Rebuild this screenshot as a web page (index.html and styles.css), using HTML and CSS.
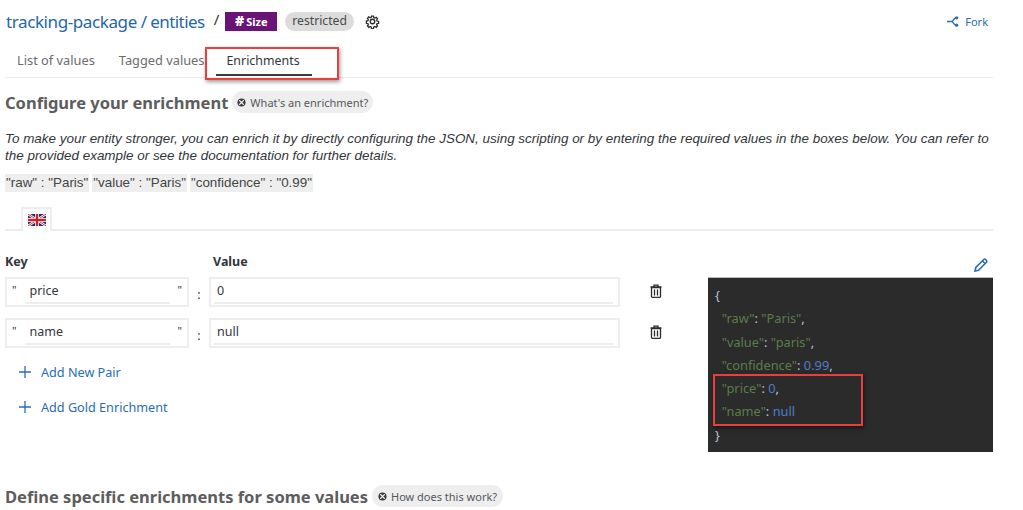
FILE: index.html
```html
<!DOCTYPE html>
<html lang="en">
<head>
<meta charset="utf-8">
<title>Enrichments</title>
<link rel="stylesheet" href="styles.css">
</head>
<body>
<div class="page">
  <header class="top">
    <div class="crumbs">
      <a class="crumb">tracking-package</a><span class="crumb-sep">/</span><a class="crumb">entities</a><span class="crumb-slash">/</span>
      <span class="tag"><b class="hash">#</b>Size</span>
      <span class="pill">restricted</span>
      <svg class="gear" viewBox="0 0 16 16" width="15" height="15"><path d="M6.800 1.200h2.400l.4 2 1.300.6 1.800-1.100 1.600 1.700-1.100 1.700.5 1.300 2 .5v2.300l-2 .5-.5 1.300 1.100 1.700-1.600 1.700-1.800-1.100-1.300.6-.4 2H6.800l-.4-2-1.300-.6-1.800 1.100-1.600-1.700 1.100-1.700-.5-1.300-2-.5V7.400l2-.5.5-1.300-1.100-1.700 1.600-1.700 1.800 1.100 1.300-.6z" fill="none" stroke="#2b2b2b" stroke-width="1.600" transform="translate(1.200 1.200) scale(.85)"/><circle cx="8" cy="8" r="2.400" fill="none" stroke="#2b2b2b" stroke-width="1.400"/></svg>
    </div>
    <a class="fork">
      <svg viewBox="0 0 14 12" width="13" height="11"><path d="M0 6h5M5 6c2 0 2-4 5-4M5 6c2 0 2 4 5 4" fill="none" stroke="#2a6db5" stroke-width="1.500"/><circle cx="10.500" cy="2" r="1.800" fill="#2a6db5"/><circle cx="10.500" cy="10" r="1.800" fill="#2a6db5"/></svg>
      Fork
    </a>
  </header>

  <nav class="tabs">
    <a class="tab">List of values</a>
    <a class="tab">Tagged values</a>
    <a class="tab active">Enrichments</a>
    <span class="mark mark-tab"></span>
  </nav>

  <section class="config">
    <div class="head-row">
      <h2>Configure your enrichment</h2>
      <span class="help"><svg class="help-icon" viewBox="0 0 10 10" width="9" height="9"><circle cx="5" cy="5" r="4.500" fill="#3a3a3a"/><path d="M2.500 2.500l5 5M7.500 2.500l-5 5" stroke="#eee" stroke-width="1.300"/></svg>What's an enrichment?</span>
    </div>
    <p class="intro">To make your entity stronger, you can enrich it by directly configuring the JSON, using scripting or by entering the required values in the boxes below. You can refer to the provided example or see the documentation for further details.</p>
    <div class="samples">
      <code>"raw" : "Paris"</code><code>"value" : "Paris"</code><code>"confidence" : "0.99"</code>
    </div>
    <div class="lang-tabs">
      <span class="lang">
        <svg viewBox="0 0 60 40" width="18" height="12"><rect width="60" height="40" fill="#1f2f6e"/><path d="M0 0l60 40M60 0L0 40" stroke="#fff" stroke-width="8"/><path d="M0 0l60 40M60 0L0 40" stroke="#c8202f" stroke-width="3"/><path d="M30 0v40M0 20h60" stroke="#fff" stroke-width="13"/><path d="M30 0v40M0 20h60" stroke="#c8202f" stroke-width="8"/></svg>
      </span>
    </div>

    <div class="editor">
      <div class="pairs">
        <div class="pair-head"><span class="col-key">Key</span><span class="col-value">Value</span></div>
        <div class="pair">
          <div class="box key"><span class="q">"</span><span class="field">price</span><span class="q">"</span></div>
          <span class="colon">:</span>
          <div class="box value"><span class="field">0</span></div>
          <svg class="trash" viewBox="0 0 12 14" width="12" height="14"><path d="M1.500 3.500h9v8.700a1.200 1.200 0 0 1-1.200 1.200H2.700a1.200 1.200 0 0 1-1.200-1.200zM.5 3h11M4 3V1.200h4V3M4.500 5.500v6M7.500 5.500v6" fill="none" stroke="#2b2b2b" stroke-width="1.300"/></svg>
        </div>
        <div class="pair">
          <div class="box key"><span class="q">"</span><span class="field">name</span><span class="q">"</span></div>
          <span class="colon">:</span>
          <div class="box value"><span class="field">null</span></div>
          <svg class="trash" viewBox="0 0 12 14" width="12" height="14"><path d="M1.500 3.500h9v8.700a1.200 1.200 0 0 1-1.200 1.200H2.700a1.200 1.200 0 0 1-1.200-1.200zM.5 3h11M4 3V1.200h4V3M4.500 5.500v6M7.500 5.500v6" fill="none" stroke="#2b2b2b" stroke-width="1.300"/></svg>
        </div>
        <a class="add"><svg viewBox="0 0 12 12" width="12" height="12"><path d="M6 0v12M0 6h12" stroke="#2a6db5" stroke-width="1.300"/></svg>Add New Pair</a>
        <a class="add"><svg viewBox="0 0 12 12" width="12" height="12"><path d="M6 0v12M0 6h12" stroke="#2a6db5" stroke-width="1.300"/></svg>Add Gold Enrichment</a>
      </div>
      <div class="json-col">
        <svg class="pencil" viewBox="0 0 14 14" width="14" height="14"><path d="M1 13l.8-3.500L9.800 1.500a1.200 1.200 0 0 1 1.700 0l1 1a1.200 1.200 0 0 1 0 1.700L4.500 12.200zM8.500 3l2.500 2.500" fill="none" stroke="#2a6db5" stroke-width="1.600"/></svg>
        <pre class="json"><span class="p">{</span>
  <span class="s">"raw"</span><span class="p">: </span><span class="s">"Paris"</span><span class="p">,</span>
  <span class="s">"value"</span><span class="p">: </span><span class="s">"paris"</span><span class="p">,</span>
  <span class="s">"confidence"</span><span class="p">: </span><span class="n">0.99</span><span class="p">,</span>
  <span class="s">"price"</span><span class="p">: </span><span class="n">0</span><span class="p">,</span>
  <span class="s">"name"</span><span class="p">: </span><span class="n">null</span>
<span class="p">}</span></pre>
        <span class="mark mark-json"></span>
      </div>
    </div>

    <div class="head-row second">
      <h2>Define specific enrichments for some values</h2>
      <span class="help"><svg class="help-icon" viewBox="0 0 10 10" width="9" height="9"><circle cx="5" cy="5" r="4.500" fill="#3a3a3a"/><path d="M2.500 2.500l5 5M7.500 2.500l-5 5" stroke="#eee" stroke-width="1.300"/></svg>How does this work?</span>
    </div>
  </section>
</div>
</body>
</html>
```
FILE: styles.css
```css
* { box-sizing: border-box; }
html, body { margin: 0; height: 100%; overflow: hidden; background: #fff; }
body { font-family: "Noto Sans", sans-serif; color: #32363a; }
.page { width: 993px; padding-left: 5px; height: 510px; overflow: hidden; }
.top { display: flex; justify-content: space-between; align-items: center; height: 42px; }
.crumbs { display: flex; align-items: center; padding-left: 1px; }
.crumb { font-size: 17px; color: #1f66ad; letter-spacing: -.4px; }
.crumb + .crumb-sep + .crumb { letter-spacing: -.55px; }
.crumb-sep { font-size: 17px; color: #1f66ad; margin: 0 3px 0 4px; }
.crumb-slash { font-size: 15px; color: #32363a; margin: -4px 6px 0 9px; }
.tag { display: inline-flex; align-items: center; justify-content: center; width: 52px; height: 19px; background: #6b1477; color: #fff; font-size: 11px; font-weight: 700; }
.hash { font-size: 14px; margin-right: 2px; line-height: 1; }
.pill { display: inline-block; margin-left: 8px; height: 19px; line-height: 18px; padding: 0 7px; border-radius: 10px; background: #dcdcdc; color: #4a4a4a; font-size: 12.200px; }
.gear { margin-left: 11px; }
.fork { display: flex; align-items: center; gap: 5px; font-size: 11px; color: #2a6db5; margin-right: 5px; }
.tabs { position: relative; display: flex; height: 36px; border-bottom: 1px solid #ececec; }
.tab { font-size: 12.800px; color: #6a6d70; line-height: 36px; padding: 0 12px; }
.tab.active { position: relative; color: #32363a; font-size: 12.400px; line-height: 37px; margin-left: -2px; }
.tab.active::after { content: ""; position: absolute; left: 2px; right: 0; bottom: 1px; height: 2px; background: #3a3a3a; }
.mark { position: absolute; border: 2px solid #ea3f3f; box-shadow: 1px 2px 4px rgba(0,0,0,.4); pointer-events: none; }
.mark-tab { left: 200px; top: 5px; width: 134px; height: 33px; }
.config { padding-top: 12px; }
.head-row { display: flex; align-items: center; gap: 4px; height: 24px; }
h2 { margin: 0; font-size: 16.500px; font-weight: 700; color: #5d5d5d; }
.help { display: inline-flex; align-items: center; gap: 4px; height: 22px; padding: 0 5px; border-radius: 11px; background: #eeeeee; color: #55585b; font-size: 11px; }
.second .help { padding: 0 6px; }
.intro { margin: 17px 0 0; font: italic 13.450px/16.500px "Liberation Sans", Arial, sans-serif; color: #32363a; width: 988px; }
.samples { display: flex; gap: 3px; margin-top: 10px; }
code { font: 13.400px/16px "Liberation Sans", Arial, sans-serif; background: #eeeeee; color: #454545; padding: 1px 1px 0; height: 18px; display: block; }
.lang-tabs { height: 30px; margin-top: 9px; padding: 6px 0 0 16px; border-bottom: 2px solid #ececec; }
.lang { display: flex; align-items: center; justify-content: center; width: 31px; height: 24px; background: #fff; border: 2px solid #eeeeee; border-bottom: 0; border-radius: 2px 2px 0 0; }
.editor { display: flex; justify-content: space-between; margin-top: 19px; }
.pairs { width: 670px; }
.pair-head { display: flex; font-size: 12.500px; font-weight: 700; color: #32363a; height: 27px; line-height: 24px; }
.col-key { width: 208px; }
.pair { display: flex; align-items: center; height: 30px; margin-bottom: 11px; }
.box { height: 30px; border: 2px solid #eeeeee; display: flex; align-items: center; padding: 0 5px; font-size: 12.500px; color: #32363a; }
.key { width: 184px; gap: 8px; }
.key .field { padding-left: 5px; }
.value { width: 411px; padding-left: 3px; }
.field { flex: 1; height: 24px; line-height: 22px; border-bottom: 2px solid #eeeeee; padding-left: 3px; }
.q { font-size: 11px; margin-top: -6px; }
.colon { width: 20px; text-align: center; font-size: 12.500px; margin-top: 4px; }
.trash { margin-left: 30px; margin-top: -2px; }
.add { display: flex; align-items: center; gap: 10px; margin-left: 14px; height: 20px; margin-bottom: 15px; font-size: 12.650px; color: #2a6db5; }
.pair + .add { margin-top: 14px; }
.json-col { position: relative; width: 285px; display: flex; flex-direction: column; align-items: flex-end; }
.pencil { margin: 8px 5px 5px 0; }
.json { margin: 0; width: 285px; height: 175px; background: #2b2b2b; border-top: 1px solid #bbb; padding: 6px 7px 0; font: 12.800px/23.300px "Noto Sans", sans-serif; }
.s { color: #5a7d4a; }
.n { color: #4a80c4; }
.p { color: #b8c4d0; }
.mark-json { left: 5px; top: 124px; width: 150px; height: 52px; box-shadow: 1px 2px 4px rgba(0,0,0,.5); }
.second { margin-top: 32px; }
```
